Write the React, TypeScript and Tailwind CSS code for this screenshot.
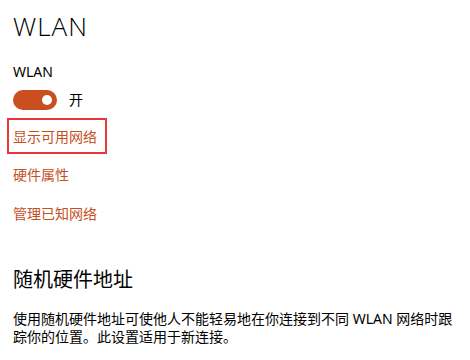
import React from 'react';

const font = { fontFamily: '"Noto Sans", "Noto Sans CJK SC", sans-serif' };

function Toggle({ on }: { on: boolean }) {
  return (
    <div
      className={`flex h-[20px] w-[44px] items-center rounded-full px-[5px] ${
        on ? 'justify-end bg-[#c94f1f]' : 'justify-start border-2 border-black bg-white'
      }`}
    >
      <div className="h-[10px] w-[10px] rounded-full bg-white" />
    </div>
  );
}

export default function App() {
  const links = ['硬件属性', '管理已知网络'];

  return (
    <div className="min-h-screen w-[470px] bg-white text-black" style={font}>
      <div className="pl-[13px] pt-[9px]">
        <h1 className="font-['Open_Sans',sans-serif] text-[26px] font-light leading-[34px] tracking-[1px]">
          WLAN
        </h1>

        <div className="mt-[19px] text-[14px] leading-[20px]">WLAN</div>

        <div className="mt-[8px] flex items-center gap-[12px]">
          <Toggle on />
          <span className="text-[14px] leading-[20px]">开</span>
        </div>

        <div className="-ml-[6px] mt-[8px] w-[100px] border-2 border-[#e5393a] pl-[4px] py-[4px]">
          <span className="text-[14px] leading-[20px] text-[#c5501f]">显示可用网络</span>
        </div>

        <div className="mt-[11px] flex flex-col gap-[19px]">
          {links.map((l) => (
            <div key={l} className="text-[14px] leading-[20px] text-[#c5501f]">
              {l}
            </div>
          ))}
        </div>

        <h2 className="mt-[42px] text-[20px] leading-[28px]">随机硬件地址</h2>

        <p className="mt-[16px] w-[446px] text-[14px] leading-[18px]">
          使用随机硬件地址可使他人不能轻易地在你连接到不同 WLAN 网络时跟踪你的位置。此设置适用于新连接。
        </p>
      </div>
    </div>
  );
}
